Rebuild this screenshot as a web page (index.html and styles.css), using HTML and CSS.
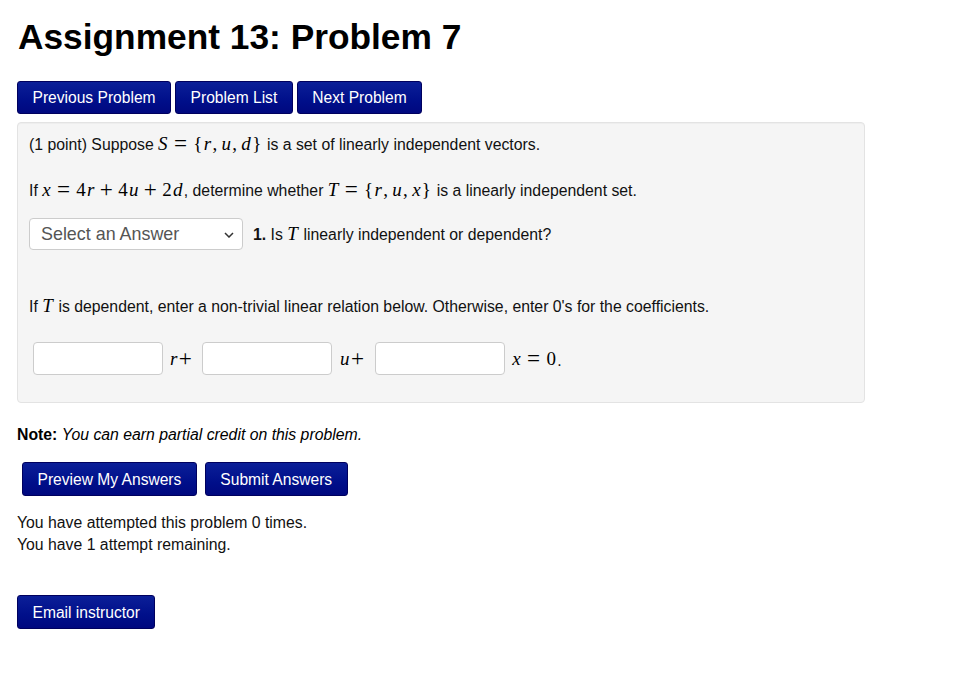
FILE: index.html
```html
<!DOCTYPE html>
<html>
<head>
<meta charset="utf-8">
<link rel="stylesheet" href="styles.css">
</head>
<body>
<h1 class="title">Assignment 13: Problem 7</h1>
<div class="nav">
  <button class="btn">Previous Problem</button>
  <button class="btn">Problem List</button>
  <button class="btn">Next Problem</button>
</div>
<div class="problem">
  <div class="line l1">(1 point) Suppose <span class="m"><i>S</i><span class="op eq">=</span>{<i>r</i><span class="c">,</span><i>u</i><span class="c">,</span><i>d</i>}</span> is a set of linearly independent vectors.</div>
  <div class="line l2">If <span class="m"><i>x</i><span class="op eq">=</span>4<i>r</i><span class="op pl">+</span>4<i>u</i><span class="op pl">+</span>2<i>d</i></span>, determine whether <span class="m"><i>T</i><span class="op eq">=</span>{<i>r</i><span class="c">,</span><i>u</i><span class="c">,</span><i>x</i>}</span> is a linearly independent set.</div>
  <div class="selrow">
    <div class="select"><span>Select an Answer</span>
      <svg class="chev" width="10" height="6" viewBox="0 0 10 6"><path d="M1 1 L5 5 L9 1" fill="none" stroke="#333" stroke-width="1.5"/></svg>
    </div>
    <span class="q"><b>1.</b> Is <span class="m"><i>T</i></span> linearly independent or dependent?</span>
  </div>
  <div class="line l3">If <span class="m"><i>T</i></span> is dependent, enter a non-trivial linear relation below. Otherwise, enter 0's for the coefficients.</div>
  <div class="inrow">
    <div class="inp first"></div><span class="m lab lr"><i>r</i><span class="op">+</span></span>
    <div class="inp"></div><span class="m lab lu"><i>u</i><span class="op">+</span></span>
    <div class="inp"></div><span class="m lab lx"><i>x</i><span class="op eq">=</span>0</span><span class="dot">.</span>
  </div>
</div>
<div class="note"><b>Note:</b> <i>You can earn partial credit on this problem.</i></div>
<div class="actions">
  <button class="btn tall">Preview My Answers</button>
  <button class="btn tall">Submit Answers</button>
</div>
<div class="attempts">
  <div>You have attempted this problem 0 times.</div>
  <div>You have 1 attempt remaining.</div>
</div>
<button class="btn tall email">Email instructor</button>
</body>
</html>
```

FILE: styles.css
```css
html, body {
  margin: 0;
  padding: 0;
  background: #fff;
}
body {
  padding: 0 17px;
  font-family: "Liberation Sans", Arial, sans-serif;
  font-size: 15.8px;
  color: #111;
}
.title {
  margin: 17px 0 0 1px;
  font-size: 35.3px;
  line-height: 40px;
  font-weight: bold;
  color: #000;
}
.nav {
  margin-top: 24px;
  display: flex;
  gap: 4px;
}
.btn {
  font-family: "Liberation Sans", Arial, sans-serif;
  font-size: 15.6px;
  color: #fff;
  height: 33px;
  padding: 0 14.5px;
  border: 1px solid #00005e;
  border-radius: 3px;
  background: linear-gradient(to bottom, #0b1f98 0%, #000f8a 60%, #00087f 100%);
  cursor: pointer;
  line-height: 31px;
}
.btn.tall {
  height: 34px;
}
.problem {
  margin-top: 8px;
  width: 824px;
  background: #f5f5f5;
  border: 1px solid #e3e3e3;
  border-radius: 4px;
  padding: 10px 11px 27px 11px;
  box-shadow: inset 0 1px 1px rgba(0,0,0,0.03);
}
.line {
  line-height: 22px;
  white-space: nowrap;
}
.l2 { margin-top: 23px; }
.m {
  font-family: "Liberation Serif", "Times New Roman", serif;
  font-size: 19px;
  color: #000;
  letter-spacing: 1.3px;
}
.m i { font-style: italic; }
.op {
  font-style: normal;
  font-size: 1.22em;
  display: inline-block;
  line-height: 10px;
  vertical-align: -1px;
}
.op.eq { margin: 0 5px; }
.op.pl { margin: 0 4px; }
.c { margin-right: 3px; }
.selrow {
  margin-top: 16px;
  display: flex;
  align-items: center;
  height: 32px;
}
.select {
  width: 214px;
  height: 32px;
  background: #fff;
  border: 1px solid #ccc;
  border-radius: 4px;
  display: flex;
  align-items: center;
  justify-content: space-between;
  padding: 0 8px 0 11px;
  box-sizing: border-box;
  font-size: 17.9px;
  color: #555;
}
.chev { margin-top: 1px; }
.q {
  margin-left: 10px;
  white-space: nowrap;
}
.l3 { margin-top: 45px; }
.inrow {
  margin-top: 24px;
  display: flex;
  align-items: center;
  height: 33px;
}
.inp {
  width: 130px;
  height: 33px;
  box-sizing: border-box;
  background: #fff;
  border: 1px solid #ccc;
  border-radius: 4px;
}
.inp.first { margin-left: 4px; }
.lab { white-space: nowrap; }
.lr { padding: 0 9px 0 7px; }
.lu { padding: 0 10px 0 8px; }
.lx { padding: 0 0 0 7px; }
.dot {
  font-size: 15.8px;
  margin-top: 4px;
}
.note {
  margin-top: 21px;
  line-height: 22px;
  color: #000;
}
.actions {
  margin-top: 16px;
  margin-left: 5px;
  display: flex;
  gap: 8px;
}
.attempts {
  margin-top: 16px;
  line-height: 22px;
  color: #111;
}
.email {
  margin-top: 39px;
  display: block;
}
```
